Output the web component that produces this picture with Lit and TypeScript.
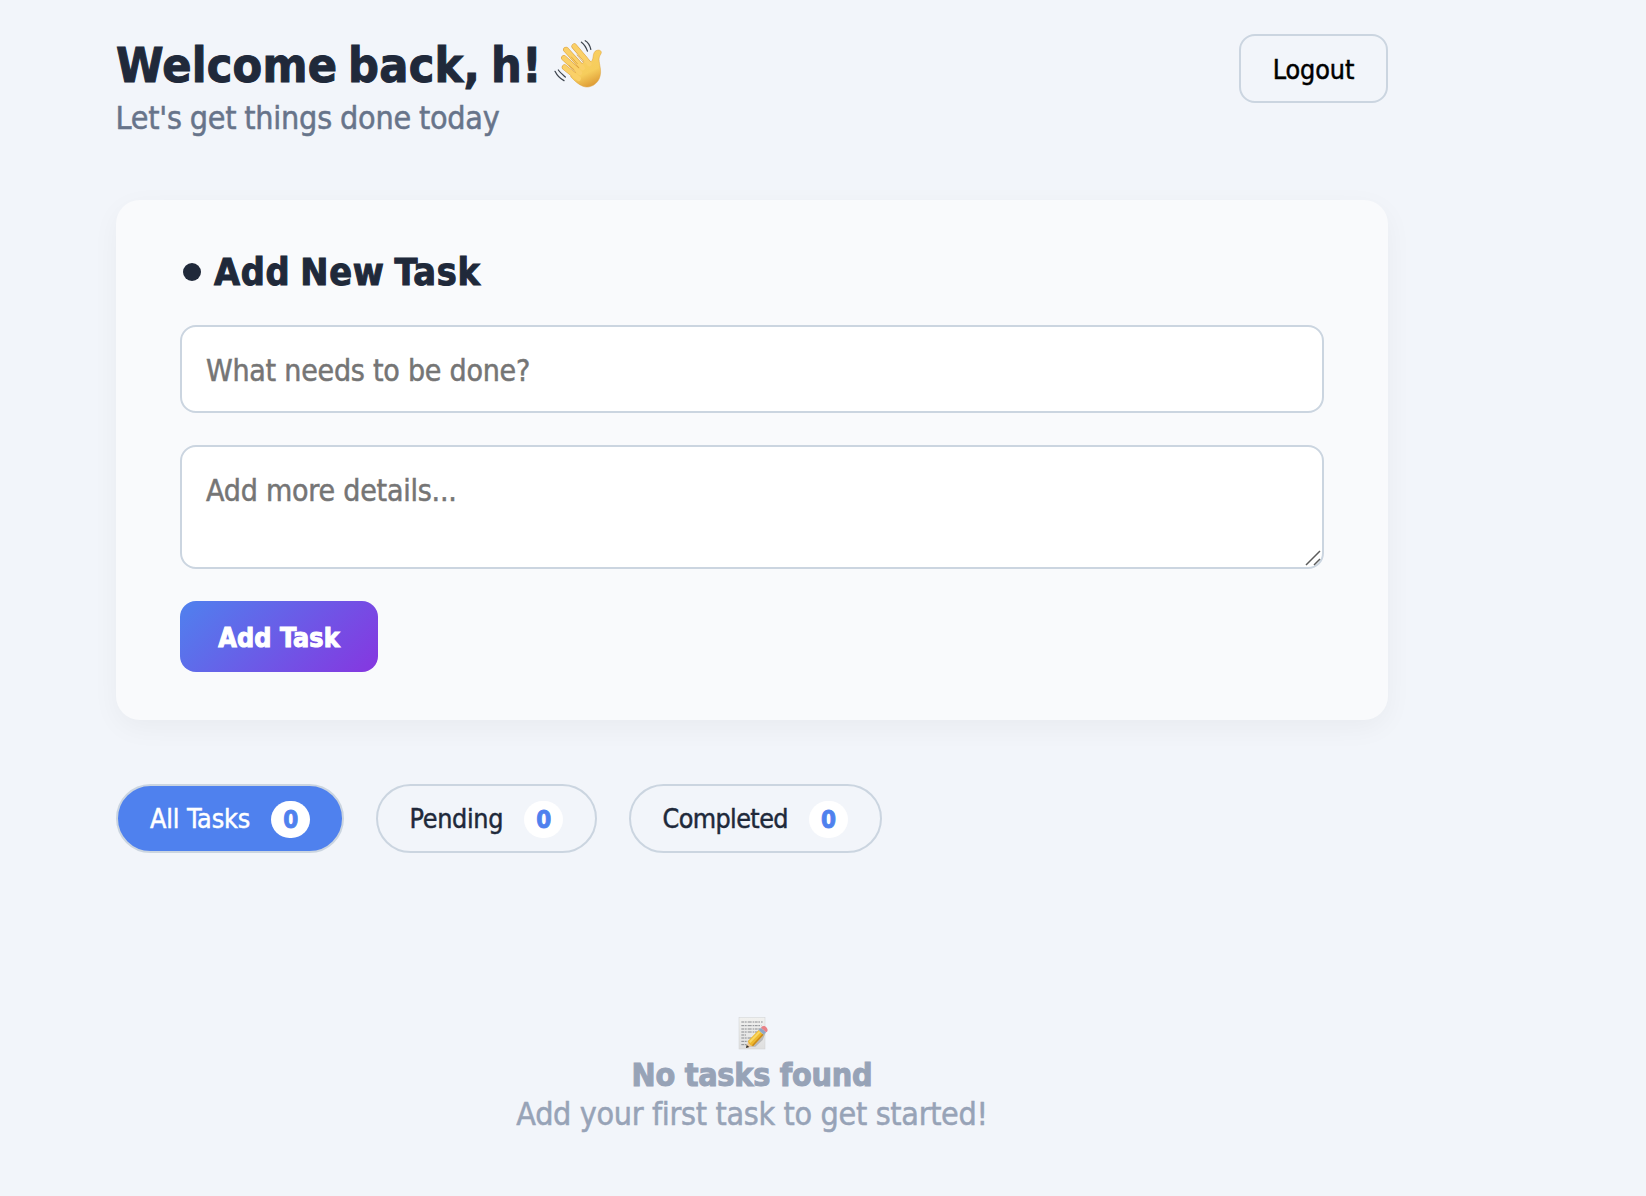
import { LitElement, html, css, svg } from "lit";
import { customElement, property, state } from "lit/decorators.js";
import { classMap } from "lit/directives/class-map.js";

interface Filter {
  id: string;
  label: string;
  count: number;
}

@customElement("wave-icon")
class WaveIcon extends LitElement {
  static styles = css`
    :host { display: block; width: 50px; height: 50px; }
    svg { display: block; width: 100%; height: 100%; }
  `;
  render() {
    const fingers = "M91 19 L136 72 M66 29 L116 84 M60 54 L108 98 M62 82 L104 116";
    return html`<svg viewBox="30 0 150 150" fill="none" stroke-linecap="round" stroke-linejoin="round">
      <defs>
        <linearGradient id="skin" x1="70" y1="20" x2="130" y2="145" gradientUnits="userSpaceOnUse">
          <stop offset="0" stop-color="#fbd066" />
          <stop offset="0.7" stop-color="#f6cd5c" />
          <stop offset="1" stop-color="#dd9a34" />
        </linearGradient>
      </defs>
      <path d=${fingers} stroke="#dca03c" stroke-width="17" />
      <path d="M88 106 L126 56 C136 64 141 67 144 62 C149 53 146 45 151 37 C156 28 171 28 172 37 C172 43 165 47 165 58 C166 76 173 91 168 109 C163 131 139 147 117 139 C104 134 91 122 80 110 Z" fill="url(#skin)" stroke="#dca03c" stroke-width="1.5" />
      <path d=${fingers} stroke="#fad068" stroke-width="14" />
      <path d="M82 51 L100 71 M75 76 L90 89 M99 45 L117 66" stroke="#d99c35" stroke-width="2.2" />
      <path d="M127 2 C134 8 138 17 138 31 M115 4 C123 13 125 19 127 34" transform="rotate(-12 126 18)" stroke="#3d444d" stroke-width="3.8" />
      <path d="M43 90 C48 97 55 103 64 111 M33 94 C39 106 48 116 60 122" stroke="#3d444d" stroke-width="3.8" />
    </svg>`;
  }
}

@customElement("memo-icon")
class MemoIcon extends LitElement {
  static styles = css`
    :host { display: block; width: 30px; height: 34px; }
    svg { display: block; width: 100%; height: 100%; }
  `;
  render() {
    const lines = [
      [28, 36, 92], [28, 47, 88], [28, 57, 84], [28, 66, 76], [28, 75, 42],
      [28, 84, 62], [28, 94, 56], [28, 104, 46],
    ];
    return html`<svg viewBox="18 18 90 102">
      <defs>
        <linearGradient id="sheet" x1="0" y1="0" x2="0" y2="1">
          <stop offset="0" stop-color="#f1f1ef" />
          <stop offset="1" stop-color="#dfdfdf" />
        </linearGradient>
      </defs>
      <rect x="21" y="22" width="78" height="95" fill="url(#sheet)" stroke="#d0d1d3" stroke-width="1.5" />
      ${lines.map(([x, y, end]) => svg`<path d="M${x} ${y} H${end}" stroke="#7b7e82" stroke-width="2.6" stroke-dasharray="9 2 5 3 12 3 4 2" fill="none" />`)}
      <path d="M52 110 L76 94 L98 70 L103 62 L92 90 L70 110 Z" fill="#8d8d8d" opacity="0.5" />
      <path d="M42 114 L49 93 L63 108 Z" fill="#ecc99a" />
      <path d="M42 114 L44 105 L52 111 Z" fill="#2f2d2b" />
      <path d="M48 93 L80 60 L95 74 L63 109 C57 108 49 101 48 93 Z" fill="#eeb82d" />
      <path d="M51 94 L81 63 L86 67 L55 99 Z" fill="#f8d765" />
      <path d="M60 106 L91 71 L95 74 L63 109 Z" fill="#c98a1d" />
      <path d="M80 60 L87 53 L102 67 L95 74 Z" fill="#8fa6c4" />
      <path d="M87 53 C91 46 100 47 104 53 C109 59 107 65 102 67 Z" fill="#e98187" />
    </svg>`;
  }
}

@customElement("filter-pill")
class FilterPill extends LitElement {
  static styles = css`
    :host { display: block; }
    .pill {
      box-sizing: border-box;
      display: flex;
      align-items: center;
      gap: 21px;
      height: 69px;
      padding: 0 32px;
      border: 2px solid #cbd5e0;
      border-radius: 35px;
      background: transparent;
      color: #20293a;
      font: 26.67px/32px "DejaVu Sans Condensed", "DejaVu Sans", sans-serif;
      -webkit-text-stroke: 0.45px currentColor;
      cursor: pointer;
    }
    .label { padding-top: 1px; white-space: nowrap; }
    .all { width: 228px; letter-spacing: -0.1px; }
    .pending { width: 221px; letter-spacing: -0.3px; }
    .completed { width: 253px; letter-spacing: -0.6px; }
    .pending, .completed { padding-left: 31.5px; }
    .active { background: #4f81ee; color: #fff; }
    .count {
      flex: none;
      margin: 2px 0 0 auto;
      width: 39px;
      height: 37px;
      box-sizing: border-box;
      padding-top: 1px;
      border-radius: 20px;
      background: #fff;
      color: #4f81ee;
      font-size: 24px;
      font-weight: 700;
      line-height: 37px;
      letter-spacing: 0;
      text-align: center;
      -webkit-text-stroke: 0.8px currentColor;
    }
  `;
  @property({ attribute: false }) filter!: Filter;
  @property({ type: Boolean }) active = false;
  render() {
    const { id, label, count } = this.filter;
    return html`<button class=${classMap({ pill: true, [id]: true, active: this.active })}>
      <span class="label">${label}</span><span class="count">${count}</span>
    </button>`;
  }
}

@customElement("app-root")
class AppRoot extends LitElement {
  static styles = css`
    :host {
      display: block;
      box-sizing: border-box;
      min-height: 1196px;
      padding: 34px 258px 0 116px;
      background: #f2f5fa;
      color: #20293a;
      font-family: "DejaVu Sans Condensed", "DejaVu Sans", sans-serif;
      -webkit-text-stroke: 0.5px currentColor;
    }
    h1, h2, h3, p { margin: 0; white-space: nowrap; }
    h1, h2, h3, .submit { -webkit-text-stroke: 1px currentColor; }
    button, input, textarea { font-family: inherit; box-sizing: border-box; }
    .header { display: flex; justify-content: space-between; align-items: flex-start; height: 104px; }
    .greeting {
      display: flex;
      gap: 12px;
      height: 64px;
      font-size: 48px;
      line-height: 62px;
      letter-spacing: 0.25px;
      word-spacing: -4.5px;
    }
    .wave { margin-top: 6px; }
    .subtitle { color: #67748a; font-size: 32px; line-height: 40px; letter-spacing: -0.25px; word-spacing: -0.8px; text-indent: -0.5px; }
    .logout {
      width: 149px;
      height: 69px;
      padding: 1px 0 0;
      border: 2px solid #cbd5e0;
      border-radius: 16px;
      background: transparent;
      color: #000;
      font-size: 26.67px;
      letter-spacing: -0.1px;
    }
    .card {
      display: flex;
      flex-direction: column;
      align-items: flex-start;
      gap: 32px;
      margin-top: 62px;
      padding: 48px 64px;
      border-radius: 24px;
      background: #f9fafc;
      box-shadow: 0 8px 28px rgba(0, 0, 0, 0.045);
    }
    .card-title {
      display: flex;
      align-items: center;
      gap: 13px;
      margin-bottom: -3px;
      padding-left: 3px;
      font-size: 37.44px;
      line-height: 48px;
      letter-spacing: 0.7px;
      word-spacing: -2.5px;
    }
    .dot { width: 18px; height: 18px; border-radius: 50%; background: currentColor; }
    .field {
      display: block;
      width: 100%;
      margin: 0;
      border: 2px solid #cbd5e0;
      border-radius: 16px;
      outline: none;
      background: #fff;
      color: #20293a;
      font-size: 30px;
    }
    .field::placeholder { color: #757575; opacity: 1; -webkit-text-stroke: 0.5px #757575; }
    .name { height: 88px; padding: 3px 24px 0; letter-spacing: -0.24px; }
    .details-wrap { position: relative; width: 100%; }
    .details { height: 124px; padding: 26px 24px 0; line-height: 36px; letter-spacing: -0.22px; resize: none; overflow: hidden; }
    .grip { position: absolute; right: 3px; bottom: 3px; width: 16px; height: 16px; pointer-events: none; }
    .submit {
      width: 198px;
      height: 71px;
      padding: 1px 0 0;
      border: 0;
      border-radius: 16px;
      background: linear-gradient(135deg, #4f81ee, #8636e0);
      color: #fff;
      font-size: 26.67px;
      font-weight: 700;
      letter-spacing: 0.1px;
    }
    .filters { display: flex; gap: 32px; margin-top: 64px; }
    .empty {
      display: flex;
      flex-direction: column;
      align-items: center;
      margin-top: 163px;
      color: #97a3b7;
      font-size: 32px;
      line-height: 39px;
    }
    .memo { margin-left: 2px; }
    .empty-title { margin-top: 6px; font-size: 32px; letter-spacing: -0.25px; }
    .empty-text { letter-spacing: -0.33px; }
  `;

  @state() private filters: Filter[] = [
    { id: "all", label: "All Tasks", count: 0 },
    { id: "pending", label: "Pending", count: 0 },
    { id: "completed", label: "Completed", count: 0 },
  ];
  @state() private selected = "all";

  render() {
    return html`
      <header class="header">
        <div>
          <h1 class="greeting"><span>Welcome back, h!</span><wave-icon class="wave"></wave-icon></h1>
          <p class="subtitle">Let's get things done today</p>
        </div>
        <button class="logout">Logout</button>
      </header>
      <section class="card">
        <h2 class="card-title"><span class="dot"></span>Add New Task</h2>
        <input class="field name" placeholder="What needs to be done?" />
        <div class="details-wrap">
          <textarea class="field details" placeholder="Add more details..."></textarea>
          <svg class="grip" viewBox="0 0 16 16" stroke="#5c5c5c" stroke-width="1.5" fill="none">
            <path d="M1 15 L15 1 M9 15 L15 9" />
          </svg>
        </div>
        <button class="submit">Add Task</button>
      </section>
      <nav class="filters">
        ${this.filters.map((f) => html`<filter-pill
          .filter=${f}
          ?active=${f.id === this.selected}
          @click=${() => (this.selected = f.id)}
        ></filter-pill>`)}
      </nav>
      <section class="empty">
        <memo-icon class="memo"></memo-icon>
        <h3 class="empty-title">No tasks found</h3>
        <p class="empty-text">Add your first task to get started!</p>
      </section>
    `;
  }
}
